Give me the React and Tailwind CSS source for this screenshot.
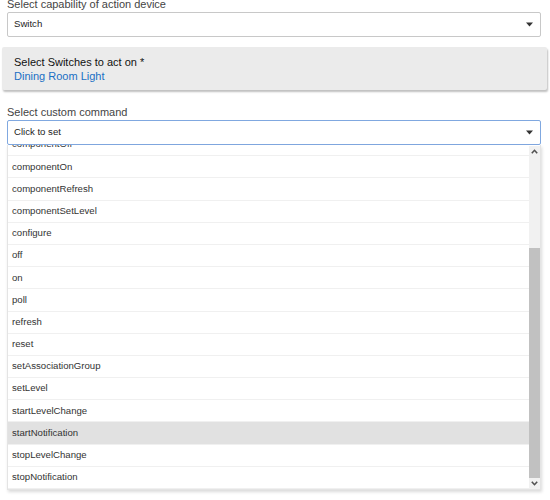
import React from 'react'

const commands = [
  'componentOff',
  'componentOn',
  'componentRefresh',
  'componentSetLevel',
  'configure',
  'off',
  'on',
  'poll',
  'refresh',
  'reset',
  'setAssociationGroup',
  'setLevel',
  'startLevelChange',
  'startNotification',
  'stopLevelChange',
  'stopNotification',
]

const Caret = () => (
  <svg width="7" height="5" viewBox="0 0 7 5" className="text-[#333]">
    <path d="M0 0.5h7L3.5 4.5z" fill="currentColor" />
  </svg>
)

const Chevron = ({ up }) => (
  <svg width="7" height="5" viewBox="0 0 7 5" fill="none" stroke="#505050" strokeWidth="1.6">
    <path d={up ? 'M0.8 4.2L3.5 1.3 6.2 4.2' : 'M0.8 0.8L3.5 3.7 6.2 0.8'} />
  </svg>
)

export default function App() {
  return (
    <div className="w-[550px] h-[500px] overflow-hidden bg-white font-['Liberation_Sans',Arial,sans-serif] text-[#333]">
      <div className="-mt-[4px] px-[7px] pr-[9px]">
        {/* capability */}
        <div className="text-[11px] leading-[16px] text-[#444]">Select capability of action device</div>
        <div className="h-[25px] border border-[#c8c8c8] rounded-[2px] flex items-center justify-between pl-[6px] pr-[7px] text-[9.6px] text-[#222]">
          <span>Switch</span>
          <Caret />
        </div>
      </div>

      {/* device panel */}
      <div className="mt-[10px] ml-[2px] w-[545px] h-[43px] bg-[#ebebeb] rounded-[2px] shadow-[1px_2px_2px_rgba(0,0,0,0.25)] px-[12px] pt-[8px] text-[11px] leading-[14px]">
        <div className="text-[#111]">Select Switches to act on *</div>
        <div className="text-[#1a6fc4]">Dining Room Light</div>
      </div>

      <div className="mt-[14px] px-[7px] pr-[9px]">
        <div className="text-[11px] leading-[16px] text-[#444]">Select custom command</div>
        <div className="h-[25px] border border-[#80a8e0] rounded-[2px] flex items-center justify-between pl-[6px] pr-[7px] text-[9.6px] text-[#222]">
          <span>Click to set</span>
          <Caret />
        </div>

        {/* dropdown list */}
        <div className="h-[345px] bg-white border border-t-0 border-[#e4e4e4] shadow-[1px_2px_3px_rgba(0,0,0,0.15)] flex overflow-hidden">
          <div className="flex-1 overflow-hidden">
            <div className="-mt-[11px]">
              {commands.map((c) => (
                <div
                  key={c}
                  className={`h-[22.2px] flex items-center pl-[4px] text-[9.6px] text-[#333] border-b border-[#f0f0f0] ${
                    c === 'startNotification' ? 'bg-[#e1e1e1]' : ''
                  }`}
                >
                  {c}
                </div>
              ))}
            </div>
          </div>
          <div className="w-[11px] mt-[1px] bg-[#f1f1f1] flex flex-col">
            <div className="h-[11px] flex items-center justify-center">
              <Chevron up />
            </div>
            <div className="h-[91px]" />
            <div className="flex-1 bg-[#c1c1c1]" />
            <div className="h-[11px] flex items-center justify-center">
              <Chevron />
            </div>
          </div>
        </div>
      </div>
    </div>
  )
}
